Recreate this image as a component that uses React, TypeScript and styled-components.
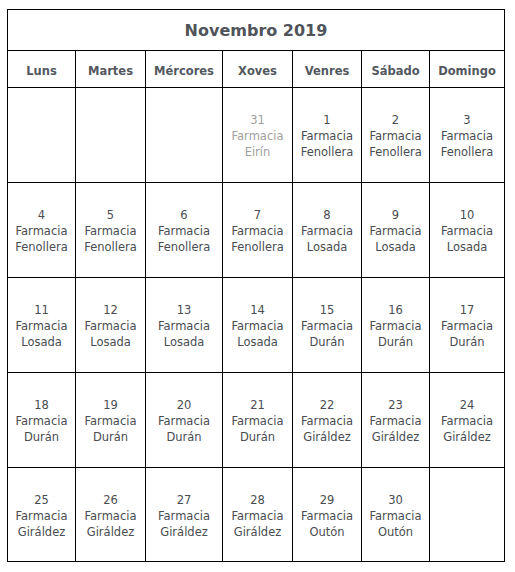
import styled, { createGlobalStyle } from "styled-components";

const GlobalStyle = createGlobalStyle`
	* {
		box-sizing: border-box;
	}
	body {
		margin: 0;
		background: #ffffff;
		font-family: "DejaVu Sans", Verdana, sans-serif;
	}
`;

type Day = {
	day: number;
	pharmacy: string;
	muted?: boolean;
};

const weekDays = ["Luns", "Martes", "Mércores", "Xoves", "Venres", "Sábado", "Domingo"];

const pharmacyFor = (day: number) => {
	if (day <= 7) return "Fenollera";
	if (day <= 14) return "Losada";
	if (day <= 21) return "Durán";
	if (day <= 28) return "Giráldez";
	return "Outón";
};

const days: (Day | null)[] = [
	null,
	null,
	null,
	{ day: 31, pharmacy: "Eirín", muted: true },
	...Array.from({ length: 30 }, (_, i) => ({ day: i + 1, pharmacy: pharmacyFor(i + 1) })),
	null,
];

export default function App() {
	return (
		<Page>
			<GlobalStyle />
			<Calendar>
				<Title>Novembro 2019</Title>
				{weekDays.map((name) => (
					<HeadCell key={name}>{name}</HeadCell>
				))}
				{days.map((d, index) => (
					<DayCell key={index} $muted={d?.muted}>
						{d && (
							<>
								<span>{d.day}</span>
								<span>Farmacia</span>
								<span>{d.pharmacy}</span>
							</>
						)}
					</DayCell>
				))}
			</Calendar>
		</Page>
	);
}

const Page = styled.div`
	padding: 9px 0 0 7px;
`;

const Calendar = styled.div`
	display: grid;
	grid-template-columns: 68px 70px 77px 70px 69px 68px 75px;
	grid-template-rows: 41px 37px 95px 95px 95px 95px 94px;
	width: 498px;
	border-left: 1px solid #000;
	border-top: 1px solid #000;
`;

const Cell = styled.div`
	display: flex;
	align-items: center;
	justify-content: center;
	border-right: 1px solid #000;
	border-bottom: 1px solid #000;
`;

const Title = styled(Cell)`
	grid-column: 1 / -1;
	font-size: 16px;
	font-weight: bold;
	color: #50545a;
	padding-top: 1px;
`;

const HeadCell = styled(Cell)`
	font-size: 11.5px;
	font-weight: bold;
	color: #53585f;
	padding-top: 3px;
`;

const DayCell = styled(Cell)<{ $muted?: boolean }>`
	flex-direction: column;
	font-size: 11.5px;
	line-height: 16px;
	color: ${({ $muted }) => ($muted ? "#a0a0a0" : "#4a4d52")};
	text-align: center;
	padding-top: 2px;
`;
